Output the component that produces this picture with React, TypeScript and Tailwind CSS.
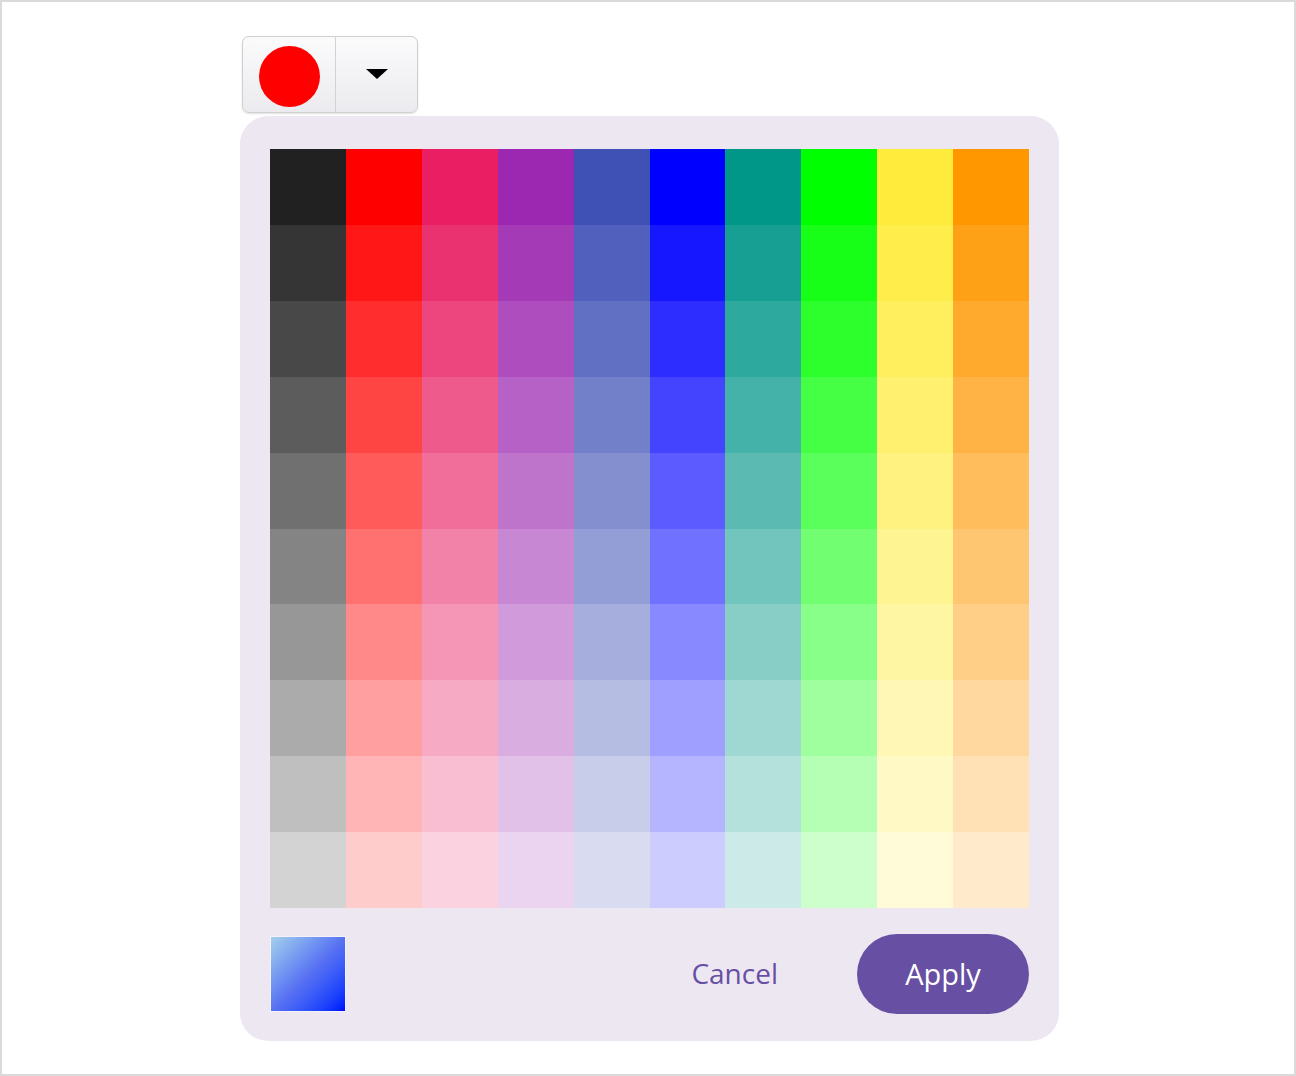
import React from "react";

const BASES = [
  "#212121",
  "#ff0000",
  "#e91e63",
  "#9c27b0",
  "#3f51b5",
  "#0000ff",
  "#009688",
  "#00ff00",
  "#ffeb3b",
  "#ff9800",
];

function tint(hex: string, t: number): string {
  const n = parseInt(hex.slice(1), 16);
  const r = (n >> 16) & 255;
  const g = (n >> 8) & 255;
  const b = n & 255;
  const m = (c: number) => Math.round(c + (255 - c) * t);
  return `rgb(${m(r)}, ${m(g)}, ${m(b)})`;
}

export default function App() {
  const rows = Array.from({ length: 10 }, (_, i) => i);
  return (
    <div
      className="w-[1296px] h-[1076px] border-2 border-[#dadada] bg-white flex flex-col pl-[238px] pt-[34px]"
      style={{ fontFamily: '"Open Sans", "Noto Sans", sans-serif' }}
    >
      {/* split button */}
      <div className="ml-[2px] w-[176px] h-[77px] flex rounded-[7px] border border-[#cfcfcf] bg-gradient-to-b from-[#fbfbfc] to-[#ebeaee] shadow-[0_1px_2px_rgba(0,0,0,0.12)] overflow-hidden">
        <div className="w-[93px] h-full flex items-center justify-center border-r border-[#d2d2d4] pt-[3px]">
          <div className="w-[61px] h-[61px] rounded-full bg-[#ff0000]" />
        </div>
        <div className="flex-1 h-full flex items-center justify-center pb-[2px]">
          <svg width="24" height="12" viewBox="0 0 24 12">
            <polygon points="1,1 23,1 12,11" fill="#000" />
          </svg>
        </div>
      </div>

      {/* palette panel */}
      <div className="mt-[3px] w-[819px] h-[925px] rounded-[28px] bg-[#ede7f2] pt-[33px] px-[30px] flex flex-col">
        <div className="w-[759px] h-[759px] grid grid-cols-10 grid-rows-10">
          {rows.map((i) =>
            BASES.map((b, j) => (
              <div
                key={`${i}-${j}`}
                style={{ backgroundColor: tint(b, (i * 0.8) / 9) }}
              />
            ))
          )}
        </div>
        <div className="mt-[26px] h-[80px] flex items-center">
          <div className="w-[76px] h-[76px] border border-[#f4f2fb] bg-gradient-to-br from-[#a6d0ea] via-[#5a72f2] to-[#0000ff]" />
          <div className="flex-1" />
          <span className="text-[28px] leading-none text-[#6750a4] mr-[79px] mb-[2px]">
            Cancel
          </span>
          <button className="w-[172px] h-[80px] rounded-full bg-[#6750a4] text-white text-[29px] leading-none flex items-center justify-center pb-[2px]">
            Apply
          </button>
        </div>
      </div>
    </div>
  );
}
